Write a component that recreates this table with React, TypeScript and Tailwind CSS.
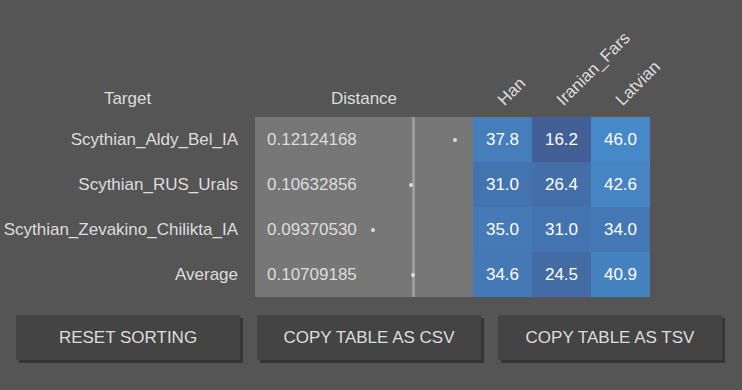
const columns = ["Han", "Iranian_Fars", "Latvian"];

const rows = [
  { target: "Scythian_Aldy_Bel_IA", distance: 0.12124168, values: [37.8, 16.2, 46.0] },
  { target: "Scythian_RUS_Urals", distance: 0.10632856, values: [31.0, 26.4, 42.6] },
  { target: "Scythian_Zevakino_Chilikta_IA", distance: 0.0937053, values: [35.0, 31.0, 34.0] },
  { target: "Average", distance: 0.10709185, values: [34.6, 24.5, 40.9] },
];

// dot position inside the distance cell, px per unit of distance
const DIST_ORIGIN = 0.0937053;
const DIST_OFFSET = 118;
const DIST_SCALE = 2982;

function dotLeft(d: number) {
  return DIST_OFFSET + (d - DIST_ORIGIN) * DIST_SCALE;
}

// blend from dark slate blue (low share) to light blue (high share)
function cellColor(v: number) {
  const t = Math.min(1, Math.max(0, (v - 16) / 30));
  const r = Math.round(66 + t * 4);
  const g = Math.round(95 + t * 42);
  const b = Math.round(150 + t * 51);
  return `rgb(${r}, ${g}, ${b})`;
}

const avg = rows[rows.length - 1].distance;

export default function App() {
  return (
    <div className="min-h-screen w-full bg-[#555555] font-['Liberation_Sans',Arial,sans-serif] text-[17px] text-[#dddddd]">
      <div className="flex h-[117px] items-end">
        <div className="w-[255px] pb-[6px] text-center">Target</div>
        <div className="w-[218px] pb-[6px] text-center">Distance</div>
        {columns.map((c) => (
          <div key={c} className="flex w-[59px] items-end pb-[7px] pl-[35px]">
            <span className="inline-block origin-bottom-left -rotate-45 whitespace-nowrap leading-5">
              {c}
            </span>
          </div>
        ))}
      </div>

      <div className="flex flex-col">
        {rows.map((row) => (
          <div key={row.target} className="flex h-[45px]">
            <div className="flex w-[255px] items-center justify-end whitespace-nowrap pr-[17px]">
              {row.target}
            </div>
            <div className="relative flex w-[218px] items-center bg-[#777777] pl-[12px]">
              {row.distance.toFixed(8)}
              <div
                className="absolute top-0 bottom-0 w-[3px] bg-[#9b9b9b]"
                style={{ left: dotLeft(avg) - 1 }}
              />
              <div
                className="absolute top-[21px] h-[4px] w-[4px] rounded-full bg-[#dddddd]"
                style={{ left: dotLeft(row.distance) - 2 }}
              />
            </div>
            {row.values.map((v, i) => (
              <div
                key={i}
                className="flex w-[59px] items-center justify-center text-white"
                style={{ backgroundColor: cellColor(v) }}
              >
                {v.toFixed(1)}
              </div>
            ))}
          </div>
        ))}
      </div>

      <div className="mt-[18px] flex gap-[17px] pl-[16px]">
        {["Reset sorting", "Copy table as CSV", "Copy table as TSV"].map((label) => (
          <button
            key={label}
            className="h-[45px] w-[224px] bg-[#444444] uppercase text-[#dddddd] shadow-[3px_3px_0_#353535]"
          >
            {label}
          </button>
        ))}
      </div>
    </div>
  );
}
